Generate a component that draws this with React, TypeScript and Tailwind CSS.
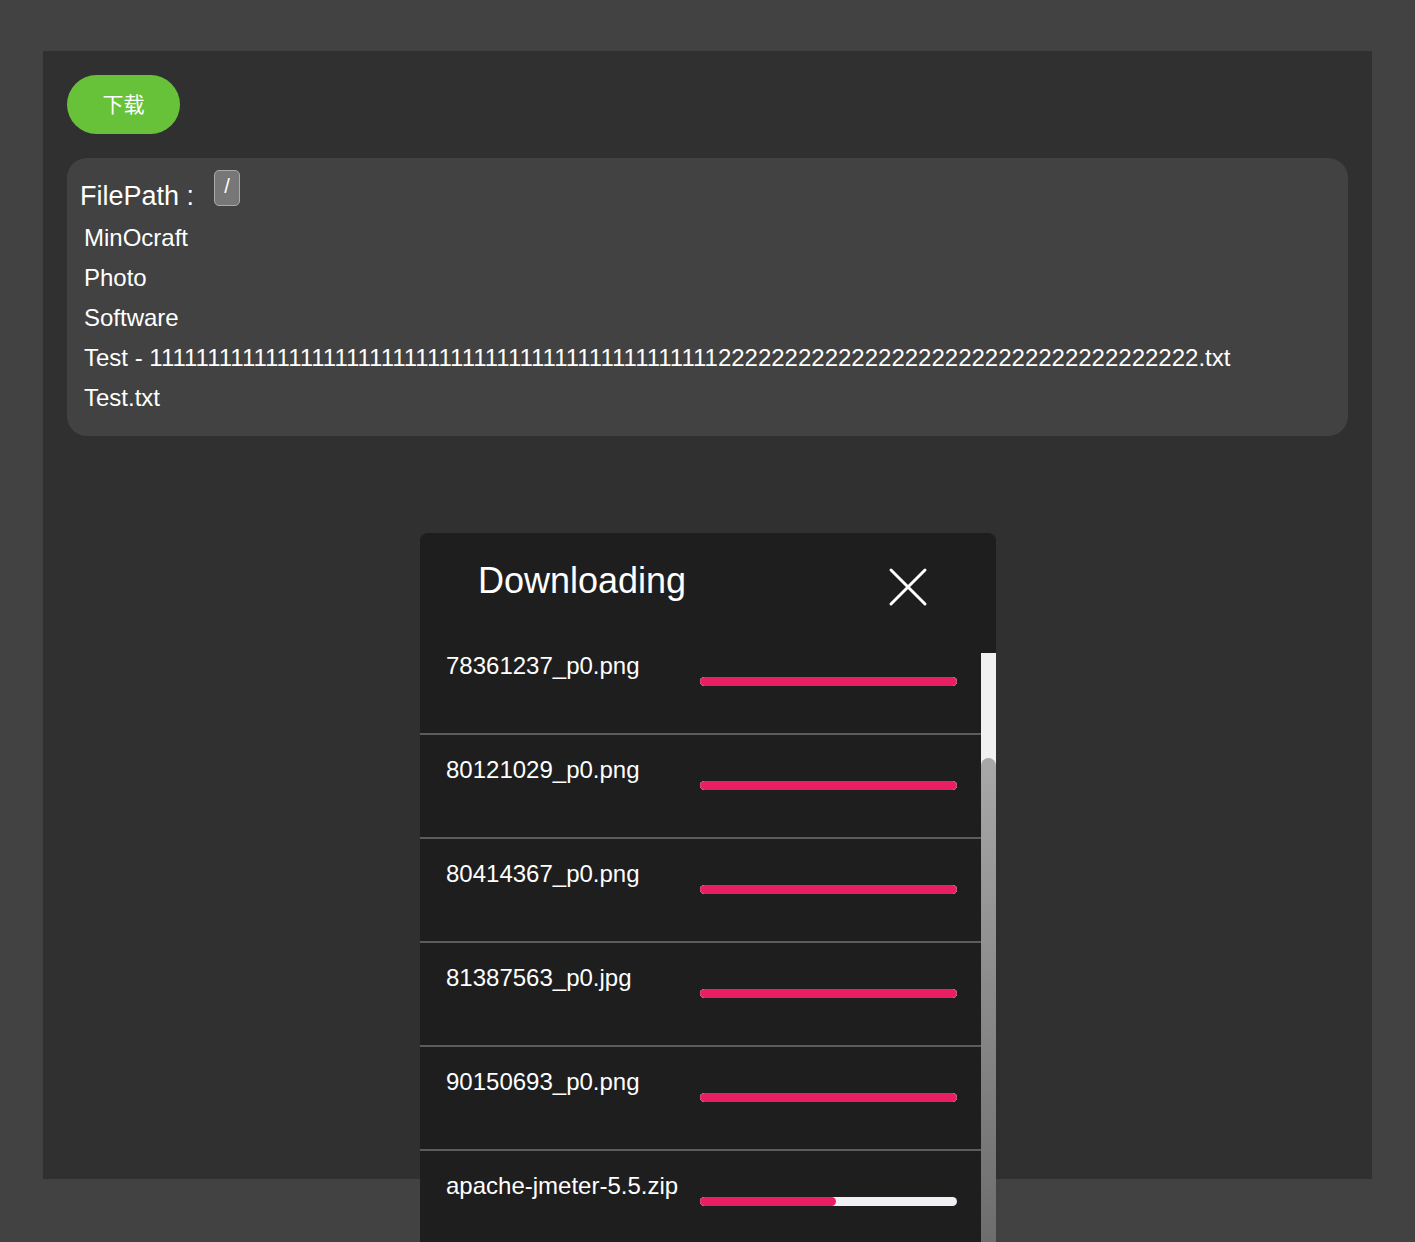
import { useState } from "react";

const items = [
  "MinOcraft",
  "Photo",
  "Software",
  "Test - " + "1".repeat(49) + "2".repeat(36) + ".txt",
  "Test.txt",
];

const downloads = [
  { name: "78361237_p0.png", progress: 100 },
  { name: "80121029_p0.png", progress: 100 },
  { name: "80414367_p0.png", progress: 100 },
  { name: "81387563_p0.jpg", progress: 100 },
  { name: "90150693_p0.png", progress: 100 },
  { name: "apache-jmeter-5.5.zip", progress: 53 },
];

function DownloadRow({ name, progress, first }: { name: string; progress: number; first?: boolean }) {
  return (
    <div
      className={`flex h-[104px] shrink-0 items-start border-b-2 border-[#5c5c5c] pt-[22px] pl-[26px] ${
        first ? "-mt-[22px]" : ""
      }`}
    >
      <div className="w-[254px] text-[24px] leading-[26px] whitespace-nowrap text-white">{name}</div>
      <div className="mt-[24px] h-[9px] w-[257px] overflow-hidden rounded-full bg-[#eef0f6]">
        <div className="h-full rounded-full bg-[#e91e63]" style={{ width: `${progress}%` }} />
      </div>
    </div>
  );
}

function DownloadDialog() {
  return (
    <div className="absolute top-[533px] left-[420px] w-[576px] overflow-hidden rounded-t-lg bg-[#1e1e1e]">
      <div className="relative h-[120px]">
        <h2 className="pt-[24px] pl-[58px] text-[36px] leading-[48px] text-white">Downloading</h2>
        <button className="absolute top-[34px] left-[468px] text-white">
          <svg width="40" height="40" viewBox="0 0 40 40" fill="none" stroke="currentColor" strokeWidth="3" strokeLinecap="round">
            <path d="M3 3 L37 37 M37 3 L3 37" />
          </svg>
        </button>
      </div>
      <div className="flex h-[600px]">
        <div className="flex w-[561px] flex-col overflow-hidden">
          {downloads.map((d, i) => (
            <DownloadRow key={d.name} name={d.name} progress={d.progress} first={i === 0} />
          ))}
        </div>
        <div className="flex w-[15px] flex-col bg-[#f1f1f1]">
          <div className="h-[105px]" />
          <div className="flex-1 rounded-t-full bg-gradient-to-b from-[#a8a8a8] to-[#6c6c6c]" />
        </div>
      </div>
    </div>
  );
}

export default function App() {
  const [path] = useState("/");

  return (
    <div className="relative h-[1242px] overflow-hidden bg-[#424242] pt-[51px] font-['Liberation_Sans','Noto_Sans_CJK_SC',sans-serif]">
      <div className="mx-[43px] h-[1128px] bg-[#303030] p-6">
        <button className="h-[59px] w-[113px] rounded-full bg-[#67c23a] text-[21px] text-white">下载</button>

        <div className="mt-6 rounded-[20px] bg-[#424242] px-[13px] pt-3 pb-[18px]">
          <div className="flex h-[48px] items-start">
            <span className="text-[27px] leading-[52px] text-white">FilePath :</span>
            <span className="ml-[20px] flex h-[36px] w-[26px] items-start justify-center rounded-[5px] border border-[#aaaaaa] bg-[#777777] pt-[3px] text-[20px] leading-[24px] text-white">
              {path}
            </span>
          </div>
          {items.map((item) => (
            <div key={item} className="px-1 text-[24px] leading-[40px] whitespace-nowrap text-white">
              {item}
            </div>
          ))}
        </div>
      </div>

      <DownloadDialog />
    </div>
  );
}
